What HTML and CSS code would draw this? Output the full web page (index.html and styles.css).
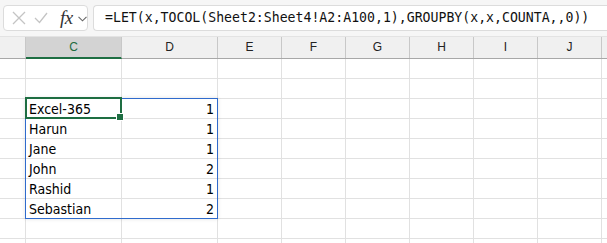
FILE: index.html
```html
<!DOCTYPE html>
<html lang="en">
<head>
    <meta charset="UTF-8">
    <title>GROUPBY sheet</title>
    <link rel="stylesheet" href="styles.css">
</head>
<body>
    <!-- formula bar -->
    <div class="fbar">
        <div class="fbtns">
            <svg class="ico" width="14" height="14" viewBox="0 0 14 14"><path d="M1 1 L13 13 M13 1 L1 13" stroke="#c4c4c4" stroke-width="1.3" fill="none"/></svg>
            <svg class="ico" width="14" height="12" viewBox="0 0 14 12"><path d="M1 6 L5.5 10.5 L13 1" stroke="#c4c4c4" stroke-width="1.3" fill="none"/></svg>
            <span class="fx">fx</span>
            <svg class="chev" width="9" height="6" viewBox="0 0 9 6"><path d="M0.5 0.8 L4.5 4.8 L8.5 0.8" stroke="#666" stroke-width="1.1" fill="none"/></svg>
        </div>
        <div class="fbox">=LET(x,TOCOL(Sheet2:Sheet4!A2:A100,1),GROUPBY(x,x,COUNTA,,0))</div>
    </div>

    <!-- column headers -->
    <div class="hdr">
        <div class="h b"></div>
        <div class="h wide sel">C</div>
        <div class="h wide">D</div>
        <div class="h">E</div>
        <div class="h">F</div>
        <div class="h">G</div>
        <div class="h">H</div>
        <div class="h">I</div>
        <div class="h">J</div>
        <div class="h rest"></div>
    </div>

    <div class="grid">
        <div class="row"><div class="c b"></div><div class="c wide"></div><div class="c wide"></div><div class="c"></div><div class="c"></div><div class="c"></div><div class="c"></div><div class="c"></div><div class="c"></div><div class="c rest"></div></div>
        <div class="row"><div class="c b"></div><div class="c wide"></div><div class="c wide"></div><div class="c"></div><div class="c"></div><div class="c"></div><div class="c"></div><div class="c"></div><div class="c"></div><div class="c rest"></div></div>
        <div class="row"><div class="c b"></div><div class="c wide">Excel-365</div><div class="c wide num">1</div><div class="c"></div><div class="c"></div><div class="c"></div><div class="c"></div><div class="c"></div><div class="c"></div><div class="c rest"></div></div>
        <div class="row"><div class="c b"></div><div class="c wide">Harun</div><div class="c wide num">1</div><div class="c"></div><div class="c"></div><div class="c"></div><div class="c"></div><div class="c"></div><div class="c"></div><div class="c rest"></div></div>
        <div class="row"><div class="c b"></div><div class="c wide">Jane</div><div class="c wide num">1</div><div class="c"></div><div class="c"></div><div class="c"></div><div class="c"></div><div class="c"></div><div class="c"></div><div class="c rest"></div></div>
        <div class="row"><div class="c b"></div><div class="c wide">John</div><div class="c wide num">2</div><div class="c"></div><div class="c"></div><div class="c"></div><div class="c"></div><div class="c"></div><div class="c"></div><div class="c rest"></div></div>
        <div class="row"><div class="c b"></div><div class="c wide">Rashid</div><div class="c wide num">1</div><div class="c"></div><div class="c"></div><div class="c"></div><div class="c"></div><div class="c"></div><div class="c"></div><div class="c rest"></div></div>
        <div class="row"><div class="c b"></div><div class="c wide">Sebastian</div><div class="c wide num">2</div><div class="c"></div><div class="c"></div><div class="c"></div><div class="c"></div><div class="c"></div><div class="c"></div><div class="c rest"></div></div>
        <div class="row"><div class="c b"></div><div class="c wide"></div><div class="c wide"></div><div class="c"></div><div class="c"></div><div class="c"></div><div class="c"></div><div class="c"></div><div class="c"></div><div class="c rest"></div></div>
        <div class="row"><div class="c b"></div><div class="c wide"></div><div class="c wide"></div><div class="c"></div><div class="c"></div><div class="c"></div><div class="c"></div><div class="c"></div><div class="c"></div><div class="c rest"></div></div>

        <!-- spill range and active cell overlays -->
        <div class="spill"></div>
        <div class="active"><span class="handle"></span></div>
    </div>
</body>
</html>
```

FILE: styles.css
```css
body {
    margin: 0;
    background: #fff;
    font-family: "Liberation Sans", Arial, sans-serif;
    overflow: hidden;
}
.fbar {
    display: flex;
    gap: 5px;
    height: 37px;
    box-sizing: border-box;
    padding: 5px 0 5px 3px;
    background: #f6f6f6;
    border-bottom: 1px solid #e3e3e3;
}
.fbtns {
    display: flex;
    align-items: center;
    width: 85px;
    box-sizing: border-box;
    padding-left: 8px;
    background: #fff;
    border: 1px solid #dcdcdc;
    border-radius: 4px;
}
.ico {
    margin-right: 8px;
}
.fx {
    font-family: "Liberation Serif", "Times New Roman", serif;
    font-style: italic;
    font-size: 19px;
    color: #333;
    margin-left: 4px;
    letter-spacing: -0.5px;
}
.chev {
    margin-left: 5px;
    margin-top: 2px;
}
.fbox {
    flex: 1;
    background: #fff;
    border: 1px solid #dcdcdc;
    border-right: none;
    border-radius: 4px 0 0 4px;
    padding: 4px 0 0 11px;
    font-family: "DejaVu Sans Mono", monospace;
    font-size: 13.2px;
    color: #111;
    white-space: nowrap;
}
.hdr {
    display: flex;
    height: 22px;
    box-sizing: border-box;
    background: #f0f0f0;
    border-bottom: 1px solid #a8a8a8;
}
.h {
    width: 64px;
    flex: none;
    box-sizing: border-box;
    border-right: 1px solid #c8c8c8;
    text-align: center;
    font-size: 12px;
    line-height: 21px;
    color: #222;
}
.h.b, .c.b {
    width: 26px;
}
.h.wide, .c.wide {
    width: 96px;
}
.h.rest, .c.rest {
    flex: 1;
    border-right: none;
}
.h.sel {
    background: #d3d3d3;
    color: #1d6b40;
    border-bottom: 2px solid #1e6e42;
    height: 22px;
    line-height: 20px;
}
.grid {
    position: relative;
    height: 184px;
    overflow: hidden;
}
.row {
    display: flex;
    height: 20px;
}
.c {
    width: 64px;
    flex: none;
    box-sizing: border-box;
    border-right: 1px solid #e1e1e1;
    border-bottom: 1px solid #e1e1e1;
    padding: 0 3px;
    font-family: "DejaVu Sans Condensed", "Liberation Sans", Arial, sans-serif;
    font-size: 14px;
    line-height: 20px;
    color: #000;
}
.num {
    text-align: right;
}
.spill {
    position: absolute;
    left: 25px;
    top: 39px;
    width: 193px;
    height: 121px;
    box-sizing: border-box;
    border: 1px solid #2f6bcd;
    box-shadow: 0 0 4px rgba(0, 0, 0, 0.12);
}
.active {
    position: absolute;
    left: 25px;
    top: 38px;
    width: 97px;
    height: 22px;
    box-sizing: border-box;
    border: 2px solid #1e6e42;
}
.handle {
    position: absolute;
    right: -4px;
    bottom: -4px;
    width: 6px;
    height: 6px;
    background: #1e6e42;
    border: 1px solid #fff;
}
```
